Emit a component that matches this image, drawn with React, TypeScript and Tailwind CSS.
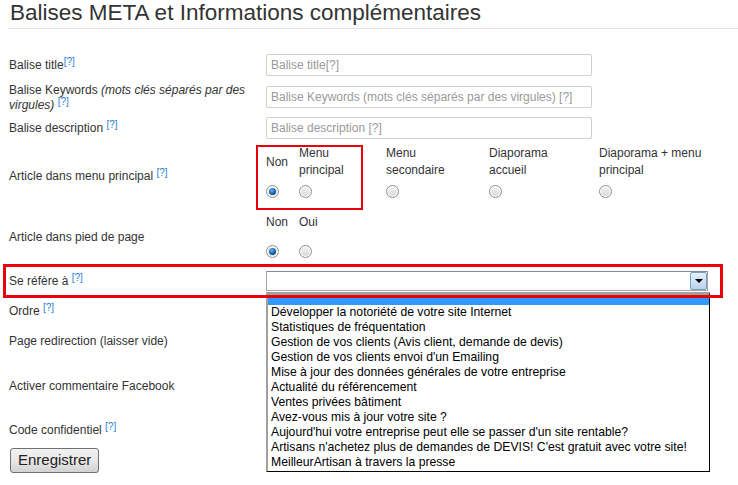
import React from 'react';

const font = "font-['Liberation_Sans',Arial,sans-serif]";

function Help({ space = true }: { space?: boolean }) {
  return (
    <>
      {space ? ' ' : ''}
      <span className="relative top-[-4px] text-[10px] leading-none text-[#1f7fd1]">[?]</span>
    </>
  );
}

function Radio({ checked = false }: { checked?: boolean }) {
  return (
    <span className="inline-flex items-center justify-center w-[13px] h-[13px] rounded-full border border-[#8e8f8f] bg-gradient-to-b from-[#f4f4f4] to-[#d8d8d8] shadow-[inset_0_0_0_1px_#fff]">
      {checked && (
        <span className="w-[7px] h-[7px] rounded-full bg-[radial-gradient(circle_at_40%_35%,#6cb4f0,#1060a8_55%,#0a3f74)]" />
      )}
    </span>
  );
}

function TextInput({ placeholder = '' }: { placeholder?: string }) {
  return (
    <input
      className="w-[326px] h-[22px] border border-[#cfcfcf] rounded-[2px] px-[4px] text-[12px] text-[#333] placeholder:text-[#9a9a9a] outline-none bg-white"
      placeholder={placeholder}
    />
  );
}

const options = [
  'Développer la notoriété de votre site Internet',
  'Statistiques de fréquentation',
  'Gestion de vos clients (Avis client, demande de devis)',
  "Gestion de vos clients envoi d'un Emailing",
  'Mise à jour des données générales de votre entreprise',
  'Actualité du référencement',
  'Ventes privées bâtiment',
  'Avez-vous mis à jour votre site ?',
  "Aujourd'hui votre entreprise peut elle se passer d'un site rentable?",
  "Artisans n'achetez plus de demandes de DEVIS! C'est gratuit avec votre site!",
  'MeilleurArtisan à travers la presse',
];

const menuChoices = [
  { w: 'w-[33px]', label: <>Non</>, checked: true },
  { w: 'w-[87px]', label: <>Menu<br />principal</> },
  { w: 'w-[103px]', label: <>Menu<br />secondaire</> },
  { w: 'w-[110px]', label: <>Diaporama<br />accueil</> },
  { w: 'w-[130px]', label: <>Diaporama + menu<br />principal</> },
];

export default function App() {
  return (
    <div className={`${font} relative w-[738px] h-[485px] bg-white text-[#333] overflow-hidden`}>
      <div className="pl-[8px]">
        <h1 className="h-[29px] border-b border-[#e5e5e5] pl-[2px] text-[22.5px] leading-[26px] text-[#333]">
          Balises META et Informations complémentaires
        </h1>
      </div>

      <div className="px-[9px] pt-[25px] text-[12px]">
        <div className="flex items-center h-[22px]">
          <div className="w-[257px]">Balise title<Help space={false} /></div>
          <TextInput placeholder="Balise title[?]" />
        </div>

        <div className="flex items-center h-[22px] mt-[10px]">
          <div className="w-[257px] pr-[4px] leading-[15px] pt-[2px]">
            Balise Keywords <i>(mots clés séparés par des virgules)</i><Help />
          </div>
          <TextInput placeholder="Balise Keywords (mots clés séparés par des virgules) [?]" />
        </div>

        <div className="flex items-center h-[22px] mt-[9px]">
          <div className="w-[257px]">Balise description<Help /></div>
          <TextInput placeholder="Balise description [?]" />
        </div>

        <div className="flex items-center mt-[6px]">
          <div className="w-[257px] pt-[4px]">Article dans menu principal<Help /></div>
          <div className="flex">
            {menuChoices.map((c, i) => (
              <div key={i} className={`${c.w} flex flex-col`}>
                <div className="h-[34px] flex items-center leading-[17px]">{c.label}</div>
                <div className="h-[24px] flex items-center">
                  <Radio checked={c.checked} />
                </div>
              </div>
            ))}
          </div>
        </div>

        <div className="flex items-center mt-[2px]">
          <div className="w-[257px] pt-[6px]">Article dans pied de page</div>
          <div className="flex">
            {['Non', 'Oui'].map((l, i) => (
              <div key={l} className="w-[33px] flex flex-col">
                <div className="h-[34px] flex items-center">{l}</div>
                <div className="h-[24px] flex items-center">
                  <Radio checked={i === 0} />
                </div>
              </div>
            ))}
          </div>
        </div>

        <div className="flex items-center h-[20px] mt-[8px]">
          <div className="w-[257px]">Se réfère à<Help /></div>
          <div className="relative w-[442px] h-[20px] border border-[#a5a5a5] border-t-[#8a8a8a] bg-white">
            <div className="absolute right-0 top-0 w-[17px] h-[18px] border border-[#7d9dbd] rounded-[2px] bg-gradient-to-b from-[#e6f1fb] to-[#b7d2ee] flex items-center justify-center">
              <span className="w-0 h-0 border-l-[4px] border-r-[4px] border-t-[4px] border-l-transparent border-r-transparent border-t-black" />
            </div>
          </div>
        </div>

        <div className="flex items-center h-[22px] mt-[9px]">
          <div className="w-[257px]">Ordre<Help /></div>
          <TextInput />
        </div>

        <div className="flex items-center h-[22px] mt-[8px]">
          <div className="w-[257px]">Page redirection (laisser vide)</div>
          <TextInput />
        </div>

        <div className="flex items-center h-[22px] mt-[23px]">
          <div className="w-[257px]">Activer commentaire Facebook</div>
          <Radio />
        </div>

        <div className="flex items-center h-[22px] mt-[22px]">
          <div className="w-[257px]">Code confidentiel<Help /></div>
          <TextInput />
        </div>

        <button className="mt-[7px] ml-[1px] h-[25px] px-[7px] text-[15px] text-[#222] border border-[#707070] rounded-[3px] bg-gradient-to-b from-[#f2f2f2] via-[#e8e8e8] to-[#d2d2d2]">
          Enregistrer
        </button>
      </div>

      {/* opened select list */}
      <div className="absolute left-[266px] top-[292px] w-[444px] h-[180px] border-t-[3px] border-l-[2px] border-t-[#a0a0a0] border-l-[#a0a0a0] border-r border-b border-r-black border-b-black bg-white text-[12.2px] text-black">
        <div className="h-[10px] bg-[#3399ff]" />
        {options.map((o) => (
          <div key={o} className="h-[15px] leading-[15px] pl-[3px] whitespace-nowrap">
            {o}
          </div>
        ))}
      </div>

      {/* annotation boxes */}
      <div className="absolute left-[256px] top-[145px] w-[107px] h-[65px] border-[2px] border-[#e8000b]" />
      <div className="absolute left-[3px] top-[264px] w-[720px] h-[34px] border-[3px] border-[#e8000b]" />
    </div>
  );
}
